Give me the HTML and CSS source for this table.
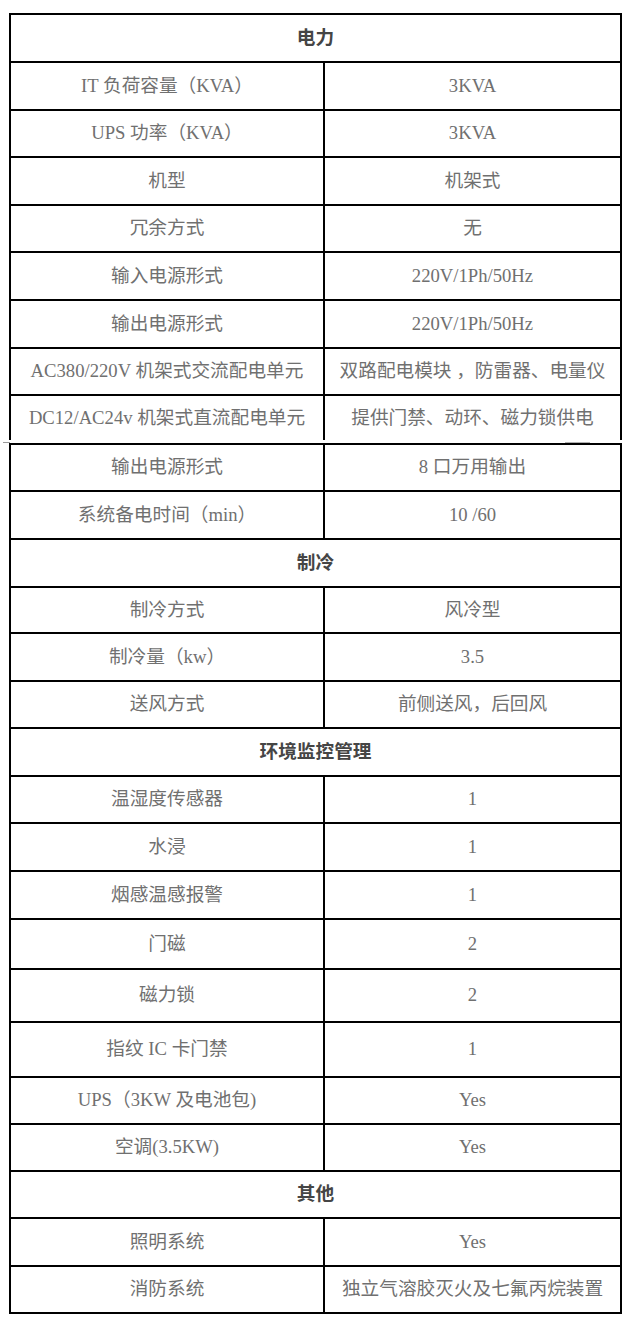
FILE: index.html
```html
<!DOCTYPE html>
<html lang="zh-CN">
<head>
<meta charset="utf-8">
<title>机柜参数</title>
<link rel="stylesheet" href="styles.css">
</head>
<body>
<div class="page">
  <div class="tbl tbl-first">
    <div class="row head h46"><div class="cell">电力</div></div>
    <div class="row h46"><div class="cell">IT 负荷容量（KVA）</div><div class="cell">3KVA</div></div>
    <div class="row h45"><div class="cell">UPS 功率（KVA）</div><div class="cell">3KVA</div></div>
    <div class="row h46"><div class="cell">机型</div><div class="cell">机架式</div></div>
    <div class="row h45"><div class="cell">冗余方式</div><div class="cell">无</div></div>
    <div class="row h46"><div class="cell">输入电源形式</div><div class="cell">220V/1Ph/50Hz</div></div>
    <div class="row h46"><div class="cell">输出电源形式</div><div class="cell">220V/1Ph/50Hz</div></div>
    <div class="row h45"><div class="cell">AC380/220V 机架式交流配电单元</div><div class="cell">双路配电模块 ，防雷器、电量仪</div></div>
    <div class="row last h44"><div class="cell">DC12/AC24v 机架式直流配电单元</div><div class="cell">提供门禁、动环、磁力锁供电</div></div>
  </div>
  <div class="brk"><span class="tick-l"></span><span class="tick-r"></span></div>
  <div class="tbl">
    <div class="row h45"><div class="cell">输出电源形式</div><div class="cell">8 口万用输出</div></div>
    <div class="row h46"><div class="cell">系统备电时间（min）</div><div class="cell">10 /60</div></div>
    <div class="row head h46"><div class="cell">制冷</div></div>
    <div class="row h44"><div class="cell">制冷方式</div><div class="cell">风冷型</div></div>
    <div class="row h46"><div class="cell">制冷量（kw）</div><div class="cell">3.5</div></div>
    <div class="row h45"><div class="cell">送风方式</div><div class="cell">前侧送风，后回风</div></div>
    <div class="row head h46"><div class="cell">环境监控管理</div></div>
    <div class="row h45"><div class="cell">温湿度传感器</div><div class="cell">1</div></div>
    <div class="row h46"><div class="cell">水浸</div><div class="cell">1</div></div>
    <div class="row h46"><div class="cell">烟感温感报警</div><div class="cell">1</div></div>
    <div class="row h48"><div class="cell">门磁</div><div class="cell">2</div></div>
    <div class="row h51"><div class="cell">磁力锁</div><div class="cell">2</div></div>
    <div class="row h53"><div class="cell">指纹 IC 卡门禁</div><div class="cell">1</div></div>
    <div class="row h45"><div class="cell">UPS（3KW 及电池包)</div><div class="cell">Yes</div></div>
    <div class="row h45"><div class="cell">空调(3.5KW)</div><div class="cell">Yes</div></div>
    <div class="row head h45"><div class="cell">其他</div></div>
    <div class="row h46"><div class="cell">照明系统</div><div class="cell">Yes</div></div>
    <div class="row h45"><div class="cell">消防系统</div><div class="cell">独立气溶胶灭火及七氟丙烷装置</div></div>
  </div>
</div>
</body>
</html>
```

FILE: styles.css
```css
html, body {
  margin: 0;
  padding: 0;
  background: #ffffff;
}

.page {
  padding: 13px 9px 0 9px;
}

.tbl {
  border: 2px solid #000;
  border-bottom: none;
}

.row {
  display: grid;
  grid-template-columns: 314px 1fr;
  border-bottom: 2px solid #000;
  box-sizing: content-box;
}

.tbl-first .row.last {
  border-bottom: none;
}

.row.head {
  grid-template-columns: 1fr;
}

.cell {
  display: flex;
  align-items: center;
  justify-content: center;
  text-align: center;
  font-family: "Liberation Serif", "Noto Sans CJK SC", serif;
  font-size: 18.67px;
  line-height: 1;
  color: #707070;
  white-space: nowrap;
}

.row > .cell:first-child {
  border-right: 2px solid #000;
}

.row.head > .cell:first-child {
  border-right: none;
  font-weight: bold;
  color: #454545;
}

.h44 { height: 44px; }
.h45 { height: 45px; }
.h46 { height: 46px; }
.h48 { height: 48px; }
.h51 { height: 51px; }
.h53 { height: 53px; }

.brk {
  display: flex;
  height: 3px;
  margin: 0 -9px;
}

.tick-l {
  width: 7px;
  height: 1px;
  margin: 2px 0 0 3px;
  background: #9a9a9a;
}

.tick-r {
  width: 25px;
  height: 1px;
  margin: 2px 41px 0 auto;
  background: #b0b0b0;
}
```
